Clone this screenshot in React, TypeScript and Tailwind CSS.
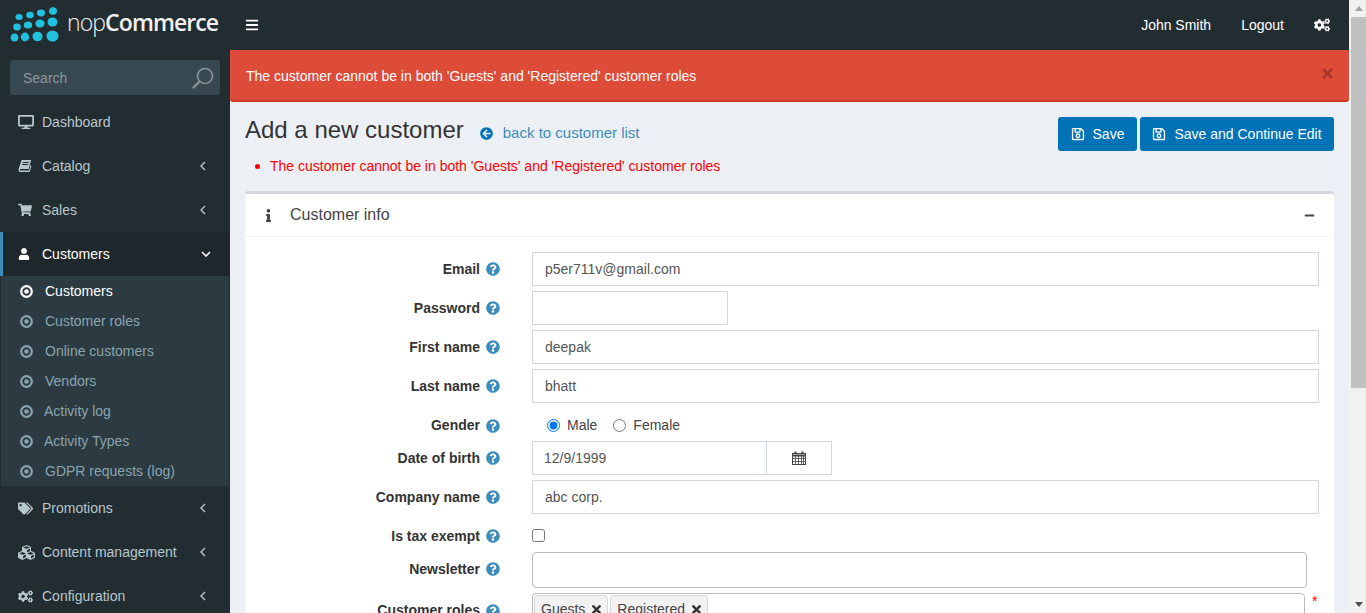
import React from "react";
import { FaDesktop, FaShoppingCart, FaUser, FaTags, FaCubes, FaCogs, FaBars, FaRegSave, FaArrowCircleLeft, FaInfo, FaMinus, FaQuestionCircle, FaTimes } from "react-icons/fa";

const BookIcon = () => (
  <svg width="14" height="14" viewBox="0 0 14 14" fill="currentColor">
    <path d="M3.6 1 H13.2 L10.6 10 H2.6 C1.6 10 1.6 11.6 2.6 11.6 H11 L12.6 6 L13.4 7 L11.6 13 H2.4 C0.8 13 0.2 11.4 0.6 10 Z M4.8 3 L4.5 4 H10.6 L10.9 3 Z M4.2 5 L3.9 6 H10 L10.3 5 Z" fillRule="evenodd" />
  </svg>
);

const DotCircle = () => (
  <svg width="13" height="13" viewBox="0 0 13 13" className="shrink-0">
    <circle cx="6.5" cy="6.5" r="5.3" fill="none" stroke="currentColor" strokeWidth="2.2" />
    <circle cx="6.5" cy="6.5" r="2.3" fill="currentColor" />
  </svg>
);

const AngleLeft = () => (
  <svg width="6" height="10" viewBox="0 0 6 10" fill="none" stroke="currentColor" strokeWidth="1.4" className="mr-[24px]">
    <path d="M5 1 L1 5 L5 9" />
  </svg>
);

const CalendarIcon = () => (
  <svg width="14" height="14" viewBox="0 0 14 14" fill="none" stroke="#444" strokeWidth="1">
    <rect x="0.5" y="2.5" width="13" height="11" />
    <path d="M0.5 4.5 H13.5" strokeWidth="2" />
    <path d="M0.5 7.5 H13.5 M0.5 10.5 H13.5 M3.5 5 V13.5 M6.5 5 V13.5 M9.5 5 V13.5 M11.5 5 V13.5" strokeWidth="0.8" />
    <path d="M3.5 0.5 V3 M10.5 0.5 V3" strokeWidth="2" />
  </svg>
);

const NavItem = ({ icon, label, arrow = true }: { icon: React.ReactNode; label: string; arrow?: boolean }) => (
  <div className="flex h-[44px] items-center text-[#b8c7ce]">
    <span className="flex w-[42px] shrink-0 justify-start pl-[18px]">{icon}</span>
    <span className="flex-1">{label}</span>
    {arrow && <AngleLeft />}
  </div>
);

const SubItem = ({ label, active, textPad = "ml-[12px]" }: { label: string; active?: boolean; textPad?: string }) => (
  <div className={`flex h-[30px] items-center pl-[19px] ${active ? "text-white" : "text-[#8aa4af]"}`}>
    <DotCircle />
    <span className={textPad}>{label}</span>
  </div>
);

const Label = ({ text }: { text: string }) => (
  <div className="flex w-[287px] shrink-0 items-center justify-end gap-[6px] pr-[32px] font-bold text-[#333]">
    <span>{text}</span>
    <FaQuestionCircle className="text-[14px] text-[#3c8dbc]" />
  </div>
);

const Field = ({ label, value, width = "w-[787px]" }: { label: string; value: string; width?: string }) => (
  <div className="mb-[5px] flex h-[34px]">
    <Label text={label} />
    <input readOnly defaultValue={value} className={`${width} h-[34px] border border-[#d2d6de] bg-white px-[12px] text-[#555] outline-none`} />
  </div>
);

const Tag = ({ text }: { text: string }) => (
  <span className="mr-[2px] flex h-[28px] items-center gap-[5px] rounded-[4px] border border-[#d2d6de] bg-[#f2f2f2] pl-[6px] pr-[4px] text-[#444]">
    {text}
    <FaTimes className="text-[13px] text-[#333]" />
  </span>
);

export default function App() {
  return (
    <div className="flex h-[613px] w-[1366px] overflow-hidden bg-[#ecf0f5] text-[14px] text-[#333] [font-family:'Liberation_Sans',Arial,sans-serif]">
      <div className="flex w-[1349px] shrink-0 flex-col">
        <header className="flex h-[50px] shrink-0 items-center bg-[#222d32] text-white">
          <div className="flex w-[230px] shrink-0 items-center">
            <svg width="64" height="50" viewBox="0 0 64 50" className="shrink-0">
              <g fill="#1fc1de">
                <ellipse cx="19" cy="17" rx="3.6" ry="3" /><ellipse cx="30" cy="15" rx="3.8" ry="3.2" /><ellipse cx="41" cy="13" rx="4" ry="3.4" /><ellipse cx="53" cy="11" rx="4" ry="3.8" />
                <ellipse cx="17" cy="27" rx="3.8" ry="3.4" /><ellipse cx="28" cy="25" rx="4.2" ry="3.6" /><ellipse cx="40" cy="23.5" rx="4.6" ry="4" /><ellipse cx="52.5" cy="22" rx="5" ry="4.6" />
                <ellipse cx="14.5" cy="37.5" rx="3.8" ry="4" /><ellipse cx="25" cy="37" rx="4.2" ry="4.4" /><ellipse cx="37.5" cy="36.5" rx="5" ry="4.8" /><ellipse cx="52.5" cy="36" rx="6" ry="5.6" />
              </g>
            </svg>
            <span className="ml-[3px] mt-[-6px] whitespace-nowrap text-[23px] tracking-[-0.9px] text-[#f2f2f2] [font-family:'Open_Sans',sans-serif]">
              <span className="font-light">nop</span><span className="font-semibold">Commerce</span>
            </span>
          </div>
          <FaBars className="ml-[15px] text-[14px]" />
          <div className="flex-1" />
          <span>John Smith</span>
          <span className="ml-[30px]">Logout</span>
          <FaCogs className="ml-[30px] mr-[19px] text-[16px]" />
        </header>
        <div className="flex min-h-0 flex-1">
          <aside className="w-[230px] shrink-0 bg-[#222d32]">
            <div className="px-[10px] pb-[5px] pt-[10px]">
              <div className="flex h-[35px] items-center justify-between rounded-[3px] bg-[#374850] pl-[13px] pr-[5px] text-[#8d989d]">
                <span className="pt-[2px]">Search</span>
                <svg width="24" height="24" viewBox="0 0 24 24" fill="none" stroke="#8a9599" strokeWidth="1.6">
                  <circle cx="14" cy="10" r="7.5" />
                  <path d="M8.5 15.5 L2.5 21.5" strokeWidth="2.4" strokeLinecap="round" />
                </svg>
              </div>
            </div>
            <NavItem icon={<FaDesktop className="text-[16px]" />} label="Dashboard" arrow={false} />
            <NavItem icon={<BookIcon />} label="Catalog" />
            <NavItem icon={<FaShoppingCart className="text-[14px]" />} label="Sales" />
            <div className="flex h-[44px] items-center border-l-[3px] border-[#3c8dbc] bg-[#1e282c] text-white">
              <span className="flex w-[39px] shrink-0 justify-start pl-[15px]"><FaUser className="text-[12px]" /></span>
              <span className="flex-1">Customers</span>
              <svg width="10" height="6" viewBox="0 0 10 6" fill="none" stroke="currentColor" strokeWidth="1.6" className="mr-[19px]">
                <path d="M1 1 L5 5 L9 1" />
              </svg>
            </div>
            <div className="mx-px bg-[#2c3b41]">
              <SubItem label="Customers" active />
              <SubItem label="Customer roles" />
              <SubItem label="Online customers" />
              <SubItem label="Vendors" />
              <SubItem label="Activity log" textPad="ml-[11px]" />
              <SubItem label="Activity Types" textPad="ml-[11px]" />
              <SubItem label="GDPR requests (log)" />
            </div>
            <NavItem icon={<FaTags className="text-[15px]" />} label="Promotions" />
            <NavItem icon={<FaCubes className="text-[17px]" />} label="Content management" />
            <NavItem icon={<FaCogs className="text-[15px]" />} label="Configuration" />
          </aside>
          <main className="min-w-0 flex-1 overflow-hidden">
            <div className="flex h-[52px] items-center justify-between rounded-b-[3px] border-b-2 border-[#d33724] bg-[#dd4b39] pl-[16px] pr-[14px] text-white">
              <span className="pt-[2px]">The customer cannot be in both 'Guests' and 'Registered' customer roles</span>
              <FaTimes className="mb-[4px] text-[15px] text-[#a8382b]" />
            </div>
            <div className="px-[15px]">
              <div className="flex h-[49px] items-start justify-between pt-[15px]">
                <div className="mt-[-2px] flex items-center">
                  <h1 className="text-[24px] leading-[26px] text-[#333]">Add a new customer</h1>
                  <FaArrowCircleLeft className="ml-[16px] mt-[7px] text-[13px] text-[#0073b7]" />
                  <span className="ml-[10px] mt-[7px] text-[15px] text-[#3c8dbc]">back to customer list</span>
                </div>
                <div className="flex gap-[3px] text-white">
                  <div className="flex h-[34px] w-[79px] items-center justify-center gap-[8px] rounded-[3px] bg-[#0073b7]"><FaRegSave className="text-[14px]" />Save</div>
                  <div className="flex h-[34px] w-[194px] items-center justify-center gap-[8px] rounded-[3px] bg-[#0073b7]"><FaRegSave className="text-[14px]" />Save and Continue Edit</div>
                </div>
              </div>
              <ul className="mb-[14px] flex h-[26px] items-center pl-[10px] pt-[4px] text-[#ff0000]">
                <li className="flex items-center gap-[10px]"><span className="size-[5px] rounded-full bg-[#ff0000]" />The customer cannot be in both 'Guests' and 'Registered' customer roles</li>
              </ul>
              <section className="rounded-[3px] border-t-[3px] border-[#d2d6de] bg-white">
                <div className="flex h-[43px] items-center border-b border-[#f4f4f4] pl-[17px] pr-[19px]">
                  <FaInfo className="text-[13px] text-[#444]" />
                  <span className="ml-[15px] flex-1 text-[16px] text-[#444]">Customer info</span>
                  <FaMinus className="text-[11px] text-[#444]" />
                </div>
                <div className="pt-[15px]">
                  <Field label="Email" value="p5er711v@gmail.com" />
                  <Field label="Password" value="" width="w-[196px]" />
                  <Field label="First name" value="deepak" />
                  <Field label="Last name" value="bhatt" />
                  <div className="mb-[5px] flex h-[28px] items-center pt-[7px]">
                    <Label text="Gender" />
                    <label className="ml-[15px] flex items-center gap-[7px] text-[#444]"><input type="radio" name="gender" defaultChecked className="m-0" />Male</label>
                    <label className="ml-[16px] flex items-center gap-[7px] text-[#444]"><input type="radio" name="gender" className="m-0" />Female</label>
                  </div>
                  <div className="mb-[5px] flex h-[34px]">
                    <Label text="Date of birth" />
                    <div className="flex h-[34px] w-[300px] border border-[#d2d6de] text-[#555]">
                      <span className="flex w-[234px] items-center border-r border-[#d2d6de] pl-[11px]">12/9/1999</span>
                      <span className="flex flex-1 items-center justify-center"><CalendarIcon /></span>
                    </div>
                  </div>
                  <Field label="Company name" value="abc corp." />
                  <div className="mb-[5px] flex h-[28px] items-center pt-[6px]">
                    <Label text="Is tax exempt" />
                    <input type="checkbox" className="m-0 mt-[-1px] size-[13px]" />
                  </div>
                  <div className="mb-[5px] flex h-[36px]">
                    <div className="flex h-[34px]"><Label text="Newsletter" /></div>
                    <div className="h-[36px] w-[775px] rounded-[4px] border border-[#bbb] bg-white" />
                  </div>
                  <div className="flex h-[36px]">
                    <div className="flex h-[34px] pt-[1px]"><Label text="Customer roles" /></div>
                    <div className="flex h-[36px] w-[773px] items-start rounded-[4px] border border-[#bbb] bg-white pl-px pt-px">
                      <Tag text="Guests" />
                      <Tag text="Registered" />
                    </div>
                    <span className="ml-[7px] mt-[-2px] text-[#ff0000]">*</span>
                  </div>
                </div>
              </section>
            </div>
          </main>
        </div>
      </div>
      <div className="flex w-[17px] shrink-0 flex-col bg-[#f1f1f1] pl-[2px]">
        <div className="flex h-[17px] items-center justify-center">
          <svg width="8" height="5" viewBox="0 0 8 5"><path d="M4 0 L8 5 L0 5 Z" fill="#a3a3a3" /></svg>
        </div>
        <div className="h-[371px] bg-[#c1c1c1]" />
        <div className="flex-1" />
        <div className="flex h-[17px] items-center justify-center">
          <svg width="8" height="5" viewBox="0 0 8 5"><path d="M4 5 L8 0 L0 0 Z" fill="#505050" /></svg>
        </div>
      </div>
    </div>
  );
}
